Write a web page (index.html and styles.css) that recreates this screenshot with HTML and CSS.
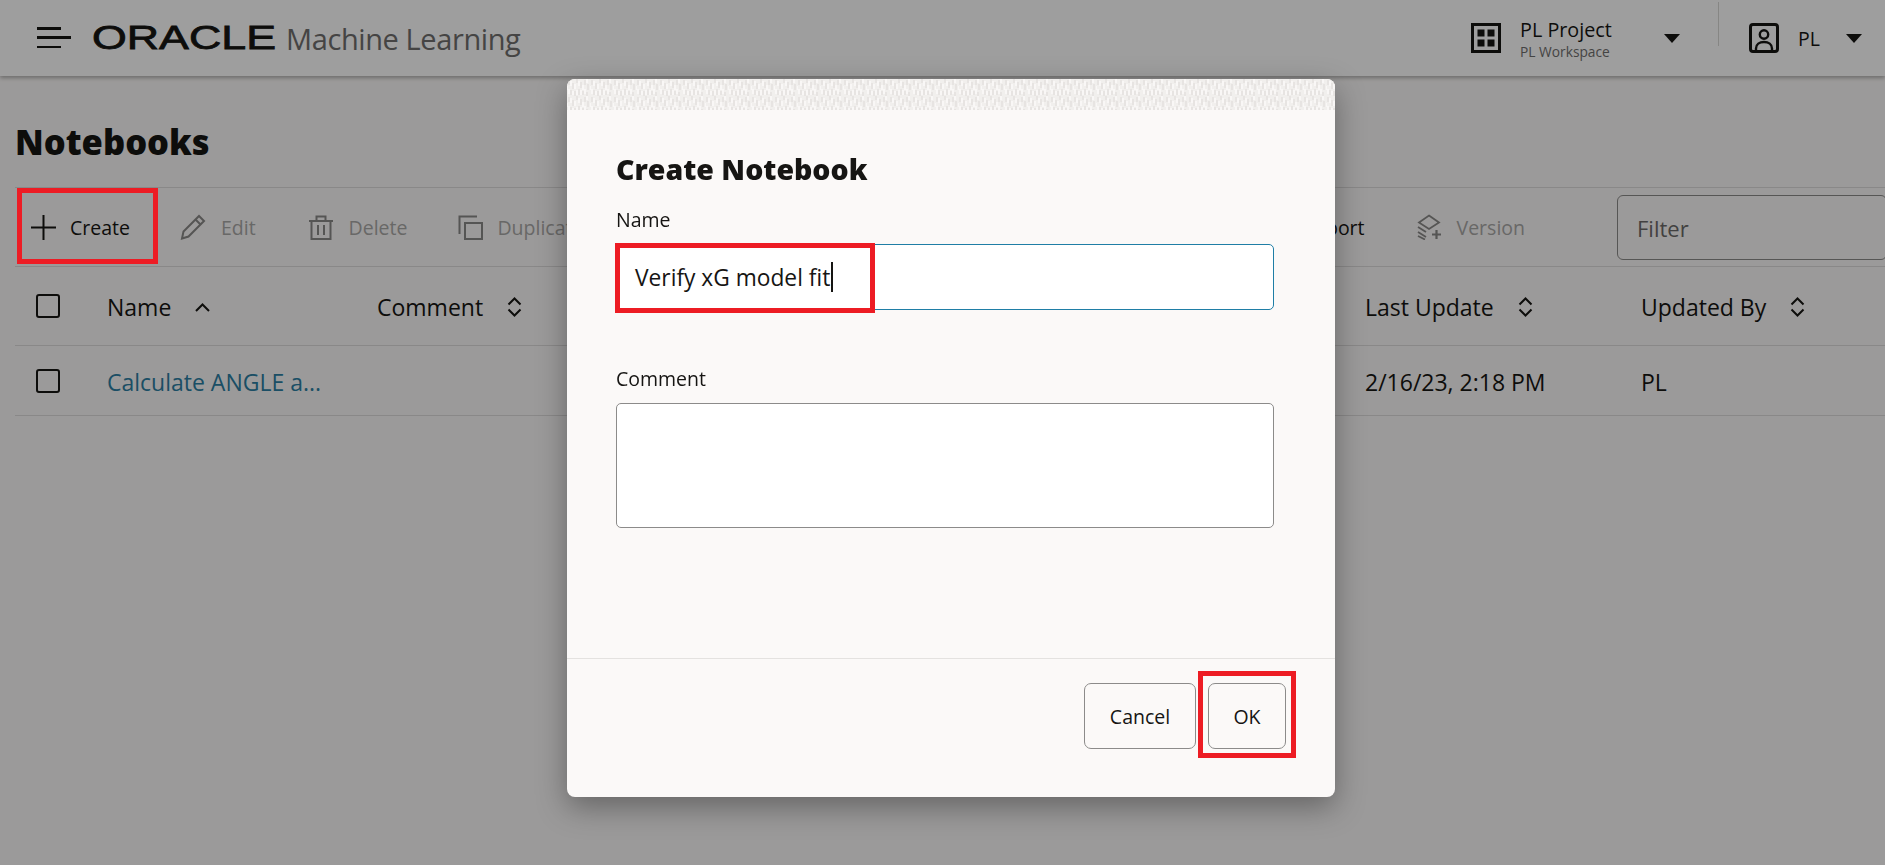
FILE: index.html
```html
<!DOCTYPE html>
<html lang="en">
<head>
  <meta charset="UTF-8" />
  <meta name="viewport" content="width=device-width, initial-scale=1.0" />
  <title>Notebooks - Oracle Machine Learning</title>
  <link rel="stylesheet" href="styles.css">
</head>
<body>
  <header class="app-header">
    <div class="menu-icon"><span></span><span class="long"></span><span></span></div>
    <svg class="oracle-logo" width="184" height="36" viewBox="0 0 184 36">
      <text x="0" y="30" textLength="184" lengthAdjust="spacingAndGlyphs">ORACLE</text>
    </svg>
    <span class="app-name">Machine Learning</span>

    <div class="project">
      <svg class="head-icon" width="30" height="30" viewBox="0 0 30 30">
        <rect x="1.5" y="1.5" width="27" height="27" fill="none" stroke="#161513" stroke-width="3"/>
        <rect x="6.5" y="6.5" width="7" height="7" fill="#161513"/>
        <rect x="16.5" y="6.5" width="7" height="7" fill="#161513"/>
        <rect x="6.5" y="16.5" width="7" height="7" fill="#161513"/>
        <rect x="16.5" y="16.5" width="7" height="7" fill="#161513"/>
      </svg>
      <div class="project-text">
        <div class="project-name">PL Project</div>
        <div class="project-sub">PL Workspace</div>
      </div>
      <span class="caret project-caret"></span>
    </div>
    <div class="head-divider"></div>
    <div class="user">
      <svg class="head-icon" width="30" height="30" viewBox="0 0 30 30" fill="none" stroke="#161513" stroke-width="2.4">
        <rect x="1.5" y="1.5" width="27" height="27" rx="2.5" stroke-width="3"/>
        <circle cx="15" cy="11.5" r="4.2"/>
        <path d="M7 28v-2.5c0-4 3.500-6.500 8-6.500s8 2.500 8 6.500V28"/>
      </svg>
      <span class="user-name">PL</span>
      <span class="caret user-caret"></span>
    </div>
  </header>

  <main class="page">
    <h1 class="page-title">Notebooks</h1>

    <div class="toolbar">
      <button class="tool tool-on tool-create">
        <svg width="25" height="25" viewBox="0 0 25 25" stroke="#161513" stroke-width="2"><path d="M12.500 0v25M0 12.500h25"/></svg>
        Create
      </button>
      <button class="tool tool-edit">
        <svg width="26" height="26" viewBox="0 0 26 26" fill="none" stroke="#8a8988" stroke-width="2"><path d="M2 24.500l1.500-7L19 2l5 5L8.500 22.500z"/><path d="M15.500 5.500l5 5"/></svg>
        Edit
      </button>
      <button class="tool tool-delete">
        <svg width="24" height="25" viewBox="0 0 24 25" fill="none" stroke="#8a8988" stroke-width="2"><path d="M0 6h24M7.500 6V1.500h9V6M2.500 6v18h19V6M9 10v10M15 10v10"/></svg>
        Delete
      </button>
      <button class="tool tool-dup">
        <svg width="25" height="25" viewBox="0 0 25 25" fill="none" stroke="#8a8988" stroke-width="2"><path d="M1.500 19V1.500H19"/><rect x="7" y="8" width="17" height="16"/></svg>
        Duplicate
      </button>
      <button class="tool tool-on tool-import">Import</button>
      <button class="tool tool-version">
        <svg width="25" height="26" viewBox="0 0 25 26" fill="none" stroke="#8a8988" stroke-width="1.800"><path d="M12 1.500l10 7-10 6.500-10-6.500z"/><path d="M1 13l8 5M1 18l8 5M1 22l7 3.500"/><path d="M19.500 16v9M15 20.500h9" stroke-width="2.200"/></svg>
        Version
      </button>
      <div class="filter">Filter</div>
    </div>

    <div class="grid-row grid-head">
      <span class="check"></span>
      <span class="cell">Name <svg class="sort" width="15" height="9" viewBox="0 0 15 9" fill="none" stroke="#161513" stroke-width="2"><path d="M1 8l6.500-6.500L14 8"/></svg></span>
      <span class="cell">Comment <svg class="sort" width="15" height="20" viewBox="0 0 15 20" fill="none" stroke="#161513" stroke-width="2"><path d="M1.500 7.500l6-6 6 6M1.500 12.500l6 6 6-6"/></svg></span>
      <span class="cell">Last Update <svg class="sort" width="15" height="20" viewBox="0 0 15 20" fill="none" stroke="#161513" stroke-width="2"><path d="M1.500 7.500l6-6 6 6M1.500 12.500l6 6 6-6"/></svg></span>
      <span class="cell">Updated By <svg class="sort" width="15" height="20" viewBox="0 0 15 20" fill="none" stroke="#161513" stroke-width="2"><path d="M1.500 7.500l6-6 6 6M1.500 12.500l6 6 6-6"/></svg></span>
    </div>
    <div class="grid-row grid-body">
      <span class="check"></span>
      <a class="cell link">Calculate ANGLE a...</a>
      <span class="cell"></span>
      <span class="cell">2/16/23, 2:18 PM</span>
      <span class="cell">PL</span>
    </div>
  </main>

  <div class="overlay"></div>
  <div class="mark mark-create"></div>

  <section class="dialog">
    <svg class="dialog-band" width="768" height="31">
      <defs>
        <pattern id="weave" width="23" height="17" patternUnits="userSpaceOnUse">
          <path d="M2 1v5M6 4v6M10 0v4M14 3v6M18 1v5M21 5v6M4 11v5M8 12v5M12 10v6M16 12v4M20 13v4" stroke="#e3e1de" stroke-width="1.500"/>
          <path d="M0 7v4M4 2v5M8 5v5M12 2v5M16 6v5M20 0v4M2 10v5M6 12v4M10 11v5M14 11v5M18 10v5" stroke="#fbfaf9" stroke-width="1.500"/>
        </pattern>
      </defs>
      <rect width="768" height="31" fill="#f1efed"/>
      <rect width="768" height="31" fill="url(#weave)"/>
    </svg>
    <div class="dialog-body">
      <h2 class="dialog-title">Create Notebook</h2>
      <label class="field-label">Name</label>
      <div class="input input-name">
        <span class="input-value">Verify xG model fit</span><span class="text-caret"></span>
        <div class="mark mark-name"></div>
      </div>
      <label class="field-label label-comment">Comment</label>
      <div class="input input-comment"></div>
    </div>
    <footer class="dialog-foot">
      <button class="btn btn-cancel">Cancel</button>
      <button class="btn btn-ok">OK<span class="mark mark-ok"></span></button>
    </footer>
  </section>
</body>
</html>
```

FILE: styles.css
```css
* { box-sizing: border-box; }
html, body { height: 100%; }
body {
  margin: 0;
  height: 865px;
  overflow: hidden;
  background: #fbf9f8;
  color: #161513;
  font-family: "Open Sans", "Noto Sans", sans-serif;
  font-size: 19.5px;
}
button { font: inherit; color: inherit; background: none; border: 0; padding: 0; }

/* header */
.app-header {
  height: 76px;
  background: #fff;
  display: flex;
  align-items: center;
  padding-left: 37px;
  box-shadow: 0 2px 4px rgba(0,0,0,0.3);
  position: relative;
}
.menu-icon { width: 34px; height: 21px; display: flex; flex-direction: column; justify-content: space-between; margin-top: -1px; }
.menu-icon span { display: block; width: 24px; height: 2.5px; background: #161513; }
.menu-icon span.long { width: 34px; }
.oracle-logo { margin-left: 21px; margin-top: -2px; }
.oracle-logo text { font-family: "Liberation Sans", sans-serif; font-size: 34px; fill: #161513; font-weight: 400; stroke: #161513; stroke-width: 0.8; }
.app-name { margin-left: 10px; font-size: 29px; color: #706f6e; font-weight: 400; letter-spacing: -0.4px; }

.project { margin-left: auto; display: flex; align-items: center; }
.project-text { margin-left: 19px; width: 144px; }
.project-name { font-size: 19.750px; line-height: 25px; margin-top: 2px; }
.project-sub { font-size: 13.750px; line-height: 20px; color: #6f6e6d; }
.caret { display: inline-block; width: 0; height: 0; border-left: 8.500px solid transparent; border-right: 8.500px solid transparent; border-top: 9px solid #161513; }
.head-divider { width: 1px; height: 44px; background: #d9d8d6; margin: -28px 30px 0 38px; }
.user { display: flex; align-items: center; padding-right: 23px; }
.user-name { margin-left: 19px; margin-right: 26px; }

/* page */
.page { padding: 0 0 0 15px; }
.page-title { margin: 0; padding-top: 43px; height: 111px; font-size: 34.500px; line-height: 46px; font-weight: 800; }

.toolbar {
  display: flex;
  align-items: center;
  height: 80px;
  border-top: 1px solid #dedcdb;
  border-bottom: 1px solid #dedcdb;
}
.tool { display: flex; align-items: center; gap: 15px; color: #a9a8a7; height: 26px; white-space: nowrap; }
.tool-on { color: #161513; }
.tool-create { margin-left: 16px; gap: 14px; }
.tool-edit { margin-left: 50px; gap: 15px; }
.tool-delete { margin-left: 53px; gap: 16px; }
.tool-dup { margin-left: 51px; gap: 14px; }
.tool-import { margin-left: auto; }
.tool-version { margin-left: 52px; }
.filter {
  margin-left: 92px;
  margin-right: -2px;
  width: 270px;
  height: 65px;
  border: 1px solid #8c8b8a;
  border-radius: 6px;
  padding: 0 19px;
  line-height: 65px;
  font-size: 22px;
  color: #6b6a69;
  flex-shrink: 0;
}

.grid-row {
  display: grid;
  grid-template-columns: 92px 270px 988px 276px 1fr;
  align-items: center;
  border-bottom: 1px solid #dedcdb;
  font-size: 23px;
}
.grid-head { height: 79px; font-weight: 500; }
.grid-head .cell { padding-top: 2px; }
.grid-body { height: 70px; }
.grid-body .cell { padding-top: 3px; }
.check { width: 24px; height: 24px; border: 2px solid #161513; border-radius: 3px; margin-left: 21px; }
.cell { display: flex; align-items: center; white-space: nowrap; }
.sort { margin-left: 24px; }
.link { color: #2c7fa3; }

/* modal */
.overlay { position: fixed; inset: 0; background: rgba(0,0,0,0.38); }
.mark { position: absolute; border: 5px solid #ed1c24; }
.mark-create { left: 17px; top: 188px; width: 141px; height: 76px; }

.dialog {
  position: absolute;
  left: 567px;
  top: 79px;
  width: 768px;
  height: 718px;
  background: #fbf9f8;
  border-radius: 8px;
  box-shadow: 0 10px 30px rgba(0,0,0,0.35);
  display: flex;
  flex-direction: column;
  overflow: hidden;
}
.dialog-band { display: block; flex: none; }
.dialog-body { flex: 1; padding: 40px 61px 0 49px; }
.dialog-title { margin: 0; font-size: 28.500px; line-height: 38px; font-weight: 800; }
.field-label { display: block; margin-top: 18px; line-height: 28px; height: 28px; }
.input { background: #fff; border: 1px solid #8c8b8a; border-radius: 5px; position: relative; }
.input-name {
  height: 66px;
  margin-top: 10px;
  border-color: #1f7ea6;
  display: flex;
  align-items: center;
  padding-left: 18px;
  font-size: 22.750px;
}
.text-caret { width: 2px; height: 30px; background: #161513; margin-left: 1px; }
.mark-name { left: -2px; top: -2px; width: 260px; height: 70px; }
.label-comment { margin-top: 55px; }
.input-comment { height: 125px; margin-top: 10px; }
.dialog-foot {
  height: 139px;
  border-top: 1px solid #e4e2e0;
  display: flex;
  justify-content: flex-end;
  gap: 12px;
  padding: 24px 49px 0 0;
}
.btn { height: 66px; border: 1px solid #8c8b8a; border-radius: 7px; position: relative; background: #fbf9f8; }
.btn-cancel { width: 112px; }
.btn-ok { width: 78px; }
.mark-ok { left: -11px; top: -13px; width: 98px; height: 87px; }
```
